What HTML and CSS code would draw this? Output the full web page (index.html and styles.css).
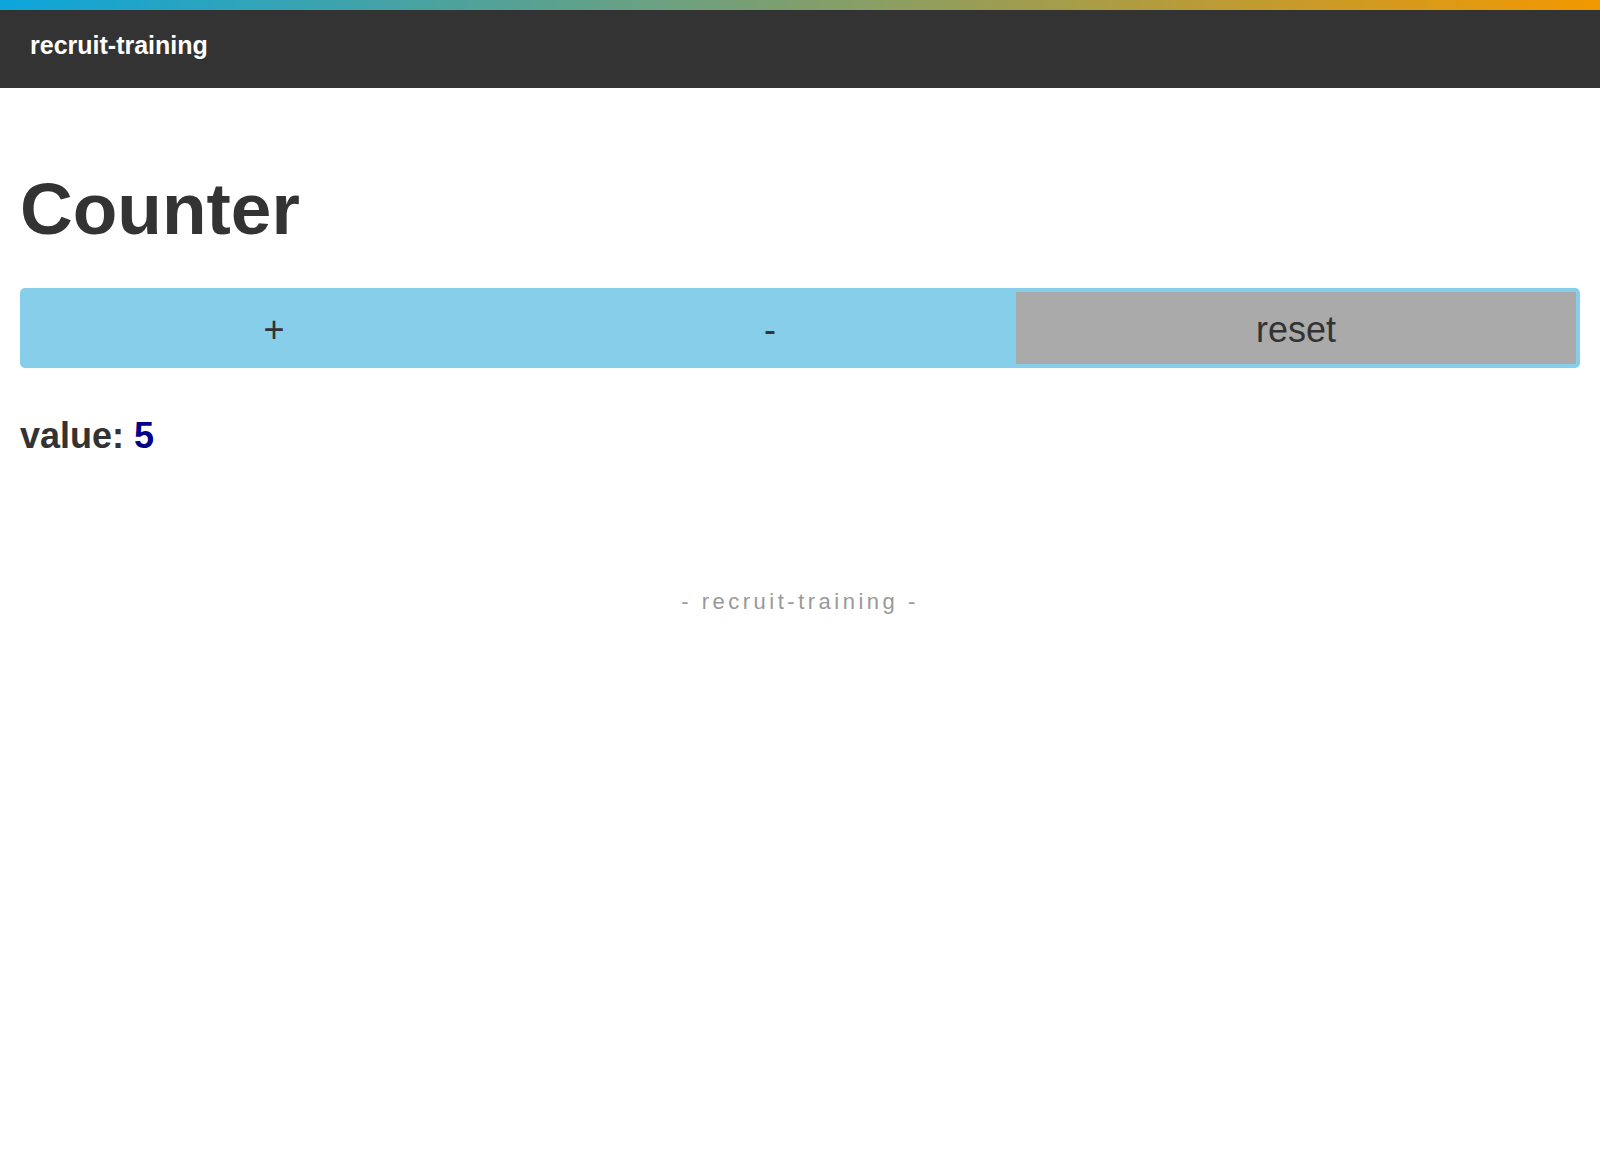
FILE: index.html
```html
<!DOCTYPE html>
<html lang="ja">
<head>
<meta charset="utf-8">
<title>recruit-training</title>
<link rel="stylesheet" href="styles.css">
</head>
<body>
<header class="site-header">
  <div class="header-bar"><span class="brand">recruit-training</span></div>
</header>
<main class="content">
  <h1 class="page-title">Counter</h1>
  <div class="btn-group">
    <button class="btn btn-plus">+</button>
    <button class="btn btn-minus">-</button>
    <button class="btn btn-reset">reset</button>
  </div>
  <p class="value">value: <span class="value-num">5</span></p>
</main>
<footer class="site-footer">- recruit-training -</footer>
</body>
</html>
```
FILE: styles.css
```css
html, body {
  margin: 0;
  padding: 0;
  background: #fff;
}
body {
  font-family: "Liberation Sans", "Noto Sans CJK JP", sans-serif;
  color: #333;
}
.site-header {
  border-top: 10px solid transparent;
  border-image: linear-gradient(to right, #0ca6db, #f39800) 1;
}
.header-bar {
  height: 78px;
  box-sizing: border-box;
  background: #333;
  display: flex;
  align-items: center;
  padding: 0 30px 8px;
}
.brand {
  color: #fff;
  font-weight: 700;
  font-size: 25px;
  line-height: 1;
  letter-spacing: 0;
}
.content {
  padding: 0 20px;
}
.page-title {
  margin: 84px 0 43px;
  font-size: 73px;
  line-height: 1;
  font-weight: 700;
  color: #333;
}
.btn-group {
  display: grid;
  grid-template-columns: 500fr 492fr 560fr;
  border: 4px solid #87ceeb;
  border-radius: 5px;
  background: #87ceeb;
  height: 72px;
}
.btn {
  border: 0;
  margin: 0;
  padding: 3px 0 0;
  font-family: inherit;
  color: #333;
  background: transparent;
  display: flex;
  align-items: center;
  justify-content: center;
  font-size: 36px;
  line-height: 1;
}
.btn-reset {
  background: #aaa;
}
.value {
  margin: 50px 0 0;
  font-size: 36px;
  line-height: 1;
  font-weight: 700;
  color: #333;
}
.value-num {
  color: #000088;
}
.site-footer {
  margin-top: 133px;
  text-align: center;
  font-size: 22px;
  line-height: 1.4;
  letter-spacing: 3.5px;
  color: #999;
}
```
